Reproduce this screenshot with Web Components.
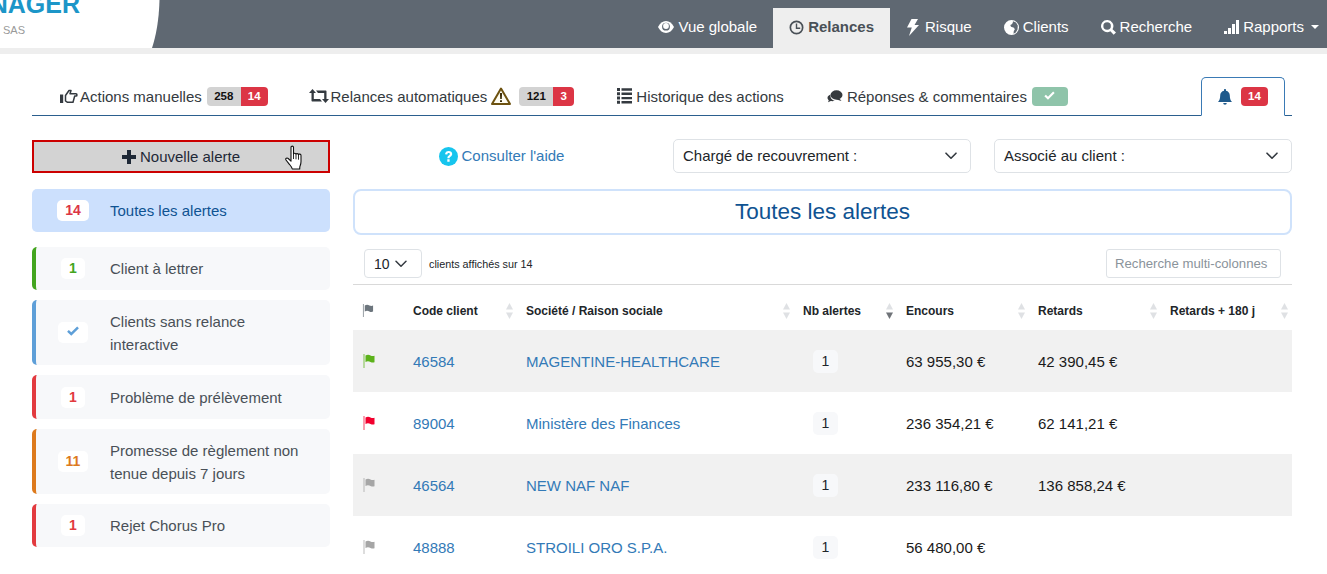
<!DOCTYPE html>
<html lang="fr">
<head>
<meta charset="utf-8">
<title>Relances</title>
<style>
  html, body { margin: 0; height: 574px; overflow: hidden; background: #fff; }
  body { font: 15px/22px "Liberation Sans", Arial, sans-serif; color: #212529; }
</style>
</head>
<body>
<app-header active="Relances"></app-header>
<main-tabs></main-tabs>
<alert-page></alert-page>

<script>
const ICONS = {
  eye: '<path d="M0 7C2 3.200 4.600 1 8 1s6 2.200 8 6c-2 3.800-4.600 6-8 6S2 10.800 0 7z"/><circle cx="8" cy="6.700" r="3.900" fill="#5f6872"/><circle cx="8" cy="6" r="2.900"/>',
  clock: '<path fill-rule="evenodd" d="M7.500.5a7 7 0 1 0 0 14 7 7 0 0 0 0-14zm0 1.700a5.300 5.300 0 1 1 0 10.600 5.300 5.300 0 0 1 0-10.600z"/><path d="M6.800 3.500h1.400v4h3v1.400H6.800z"/>',
  bolt: '<path d="M5.500 0h6.500L8.500 6H13L3 17l2.800-8.500H1z"/>',
  globe: '<circle cx="7.500" cy="7.500" r="7.500"/><path fill="#5f6872" d="M9 1.200l3 1.300 1.800 3-.3 4-1.700 3-2.300 1.300.3-2.700 1-1.600-.8-1.700L7 6.800 6.300 5l1.500-.8.900-1.200z"/>',
  search: '<path fill-rule="evenodd" d="M6.500 0a6.500 6.500 0 1 0 3.500 12L13.500 15.800 16 13.300 12.300 9.800A6.500 6.500 0 0 0 6.500 0zm0 2.500a4 4 0 1 1 0 8 4 4 0 0 1 0-8z"/>',
  signal: '<path d="M0 11h3v3H0zM4 8h3v6H4zM8 4h3v10H8zM12 0h3v14h-3z"/>',
  thumb: '<path d="M0 5.500h3.200v8.500H0z"/><path d="M5.500 6.500 9 1.500h2L10 4.800h6c1.300 0 1.300 2.200 0 2.200h-1.300L13 13.200H7.200L5.500 12z" fill="none" stroke="currentColor" stroke-width="1.500" stroke-linejoin="round"/>',
  retweet: '<path d="M3.500 0 7 4H4.800v6H11l2 2.500H3.500c-.6 0-1-.4-1-1V4H0zM7 1.500h9.500c.6 0 1 .4 1 1V10H20l-3.500 4-3.500-4h2.200V4H9z"/>',
  list: '<path d="M0 0h3v3H0zM4.500 .3H15v2.400H4.500zM0 4.300h3v3H0zM4.500 4.600H15V7H4.500zM0 8.600h3v3H0zM4.500 8.900H15v2.400H4.500zM0 12.800h3v3H0zM4.500 13.100H15v2.400H4.500z"/>',
  comments: '<ellipse cx="9.500" cy="5" rx="6" ry="4.700" fill="#35393d"/><path fill="#35393d" d="M12 8l2.500 3-5-1.500z"/><path fill="#35393d" d="M3.500 4.500C1.500 5.200.5 6.500.5 7.800c0 1 .5 1.800 1.300 2.400L1 12.300 3.800 11c1.200.3 2.800.2 4-.4C5 10.300 3 8 3.500 4.500z"/>',
  check: '<path d="M5.800 12.500.5 7.200l2.200-2.200 3.100 3.100L13.300.6l2.200 2.200z"/>',
  bell: '<path d="M7 0c.6 0 1 .4 1 1v.7c2.300.5 3.800 2.300 3.800 4.800 0 3.200.7 4.600 2.200 6.500H0c1.500-1.900 2.200-3.300 2.200-6.500C2.200 4 3.700 2.200 6 1.700V1c0-.6.400-1 1-1zM5.200 14h3.600a1.800 1.800 0 0 1-3.600 0z"/>',
  plus: '<path d="M5 0h4v5h5v4H9v5H5V9H0V5h5z"/>',
  flag: '<path d="M1 0h1v14H1z" opacity=".75"/><path d="M3 1.500c2-1 3.500-.8 5 0 1.300.6 2.500.7 4 .2v6.500c-1.500.6-2.700.4-4-.2-1.500-.7-3-1-5 0z"/>'
}

function icon(name, w, h, vb, fill) {
  return `<svg width="${w}" height="${h}" viewBox="0 0 ${vb}" fill="${fill || 'currentColor'}" aria-hidden="true">${ICONS[name]}</svg>`
}

class AppHeader extends HTMLElement {
  constructor() {
    super()
    const items = [
      ['Vue globale', icon('eye', 16, 14, '16 14')],
      ['Relances', icon('clock', 15, 15, '15 15')],
      ['Risque', icon('bolt', 15, 17, '15 17')],
      ['Clients', icon('globe', 15, 15, '15 15')],
      ['Recherche', icon('search', 15, 15, '16 16')],
      ['Rapports', icon('signal', 15, 14, '15 14')]
    ]
    const active = this.getAttribute('active')
    this.attachShadow({ mode: 'open' }).innerHTML = `
      <style>
        :host { display: block; position: relative; height: 54px; box-sizing: border-box; background: #5f6872; border-bottom: 6px solid #eee; }
        .logo { position: absolute; left: 0; top: 0; width: 160px; height: 48px; overflow: hidden; }
        .logo svg { position: absolute; left: 0; top: 0; }
        .brand { position: absolute; right: 80px; top: -11px; font: bold 25px/30px "Liberation Sans", Arial, sans-serif; color: #1c96c8; white-space: nowrap; }
        .sas { position: absolute; left: 3px; top: 24px; font: 11px/13px "Liberation Sans", Arial, sans-serif; color: #9a9a9a; }
        nav { display: flex; justify-content: flex-end; height: 48px; align-items: flex-end; }
        a { display: flex; align-items: center; gap: 4px; height: 40px; padding: 0 16px 2px; box-sizing: border-box; color: #fff; white-space: nowrap; }
        a.on { background: #eee; color: #495057; font-weight: bold; }
        .caret { width: 0; height: 0; margin-left: 3px; border: 4px solid transparent; border-top-color: #fff; border-bottom: 0; }
        a:last-child { padding-right: 8px; }
      </style>
      <div class="logo">
        <svg width="160" height="48" viewBox="0 0 160 48"><path fill="#fff" d="M0 0H159.500C159 20 156 36 152 48H0z"/></svg>
        <span class="brand">NAGER</span>
        <span class="sas">SAS</span>
      </div>
      <nav>
        ${items.map(([label, svg]) => `<a class="${label === active ? 'on' : ''}">${svg}<span>${label}</span>${label === 'Rapports' ? '<i class="caret"></i>' : ''}</a>`).join('')}
      </nav>
    `
  }
}
customElements.define('app-header', AppHeader)

class CountPill extends HTMLElement {
  constructor() {
    super()
    const grey = this.getAttribute('grey')
    const red = this.getAttribute('red')
    this.attachShadow({ mode: 'open' }).innerHTML = `
      <style>
        :host { display: inline-flex; height: 19px; border-radius: 4px; overflow: hidden; font: bold 11.500px/19px "Liberation Sans", Arial, sans-serif; text-align: center; }
        .g { background: #d3d3d3; color: #111; width: 34px; }
        .r { background: #dc3545; color: #fff; padding: 0 7px; min-width: 7px; }
      </style>
      ${grey ? `<span class="g">${grey}</span>` : ''}<span class="r">${red}</span>
    `
  }
}
customElements.define('count-pill', CountPill)

class MainTabs extends HTMLElement {
  constructor() {
    super()
    this.attachShadow({ mode: 'open' }).innerHTML = `
      <style>
        :host { display: flex; align-items: stretch; height: 38px; margin: 23px 35px 0 32px; padding-left: 28px; gap: 41px; border-bottom: 1px solid #2b5f8e; color: #343a40; }
        .tab { display: flex; align-items: center; gap: 2px; white-space: nowrap; }
        .tab > span:not(.ok) { padding-top: 2px; }
        .ok { display: inline-flex; align-items: center; justify-content: center; width: 36px; height: 19px; margin-left: 1px; border-radius: 4px; background: #8fc4aa; color: #fff; }
        .bell { margin-left: auto; margin-right: 7px; width: 84px; box-sizing: border-box; height: 39px; justify-content: center; gap: 9px; border: 1px solid #3a7ab5; border-bottom: 1px solid #fff; border-radius: 5px 5px 0 0; color: #1f5a8c; }
        .pill { margin-left: 3px; }
        .warn { margin: 0 6px 0 2px; }
        .hist { margin-left: 2px; gap: 4px; }
        .rep { margin-left: 2px; gap: 4px; }
      </style>
      <div class="tab">${icon('thumb', 18, 15, '18 15')}<span>Actions manuelles</span><count-pill class="pill" grey="258" red="14"></count-pill></div>
      <div class="tab">${icon('retweet', 20, 14, '20 14')}<span>Relances automatiques</span>
        <svg class="warn" width="20" height="18" viewBox="0 0 20 18"><path d="M10 1.500 19 17H1z" fill="#fffdf2" stroke="#6d5210" stroke-width="2" stroke-linejoin="round"/><path d="M8.900 6h2.200l-.3 6H9.200zM9 13.200h2v1.900H9z" fill="#3d2f0c"/></svg>
        <count-pill grey="121" red="3"></count-pill></div>
      <div class="tab hist">${icon('list', 15, 16, '15 16')}<span>Historique des actions</span></div>
      <div class="tab rep">${icon('comments', 16, 13, '16 13')}<span>Réponses &amp; commentaires</span><span class="ok">${icon('check', 11, 10, '16 14')}</span></div>
      <div class="tab bell">${icon('bell', 14, 16, '14 16')}<count-pill red="14"></count-pill></div>
    `
  }
}
customElements.define('main-tabs', MainTabs)

class AlertItem extends HTMLElement {
  constructor() {
    super()
    const color = this.getAttribute('color') || '#dc3545'
    const on = this.hasAttribute('active')
    this.attachShadow({ mode: 'open' }).innerHTML = `
      <style>
        :host { display: grid; grid-template-columns: 74px 1fr; align-items: center; box-sizing: border-box; min-height: 43px; padding: 9.500px 24px 9.500px 0; border-left: 4px solid ${color}; border-radius: 5px; background: ${on ? '#cce0fd' : '#f7f8fa'}; color: ${on ? '#0f5392' : '#495057'}; line-height: 23px; }
        .n { justify-self: center; padding: 0 8px; box-sizing: border-box; height: 21px; border-radius: 5px; background: #fff; color: ${color === '#cce0fd' ? '#dc3545' : color}; font: bold 14px/21px "Liberation Sans", Arial, sans-serif; text-align: center; }
      </style>
      <span class="n"><slot name="n"></slot></span>
      <span><slot></slot></span>
    `
  }
}
customElements.define('alert-item', AlertItem)

class NewAlertButton extends HTMLElement {
  constructor() {
    super()
    this.attachShadow({ mode: 'open' }).innerHTML = `
      <style>
        :host { display: flex; position: relative; align-items: center; justify-content: center; gap: 4px; height: 33px; box-sizing: border-box; background: #d3d3d3; border: 2px solid #c00; color: #1f2937; }
        .hand { position: absolute; left: 251px; top: 3px; }
      </style>
      ${icon('plus', 14, 14, '14 14')}<slot></slot>
      <svg class="hand" width="20" height="26" viewBox="0 0 20 26"><path d="M6 2.200c0-1.500 2.500-1.500 2.500 0V9c0-1 2.500-1 2.500 .3 0-1 2.500-1 2.500 .4 .2-.9 2.500-.8 2.500 .8v6c0 3-1 4-1.200 5.500 0 .7-.1 1.500-.1 2H7.300c-.3-2-1.800-3.300-3.300-5.200L1 15c-.9-1.500 1-2.700 2.200-1.500L6 16.200z" fill="#fff" stroke="#111" stroke-width="1.100" stroke-linejoin="round"/><path d="M8.500 9v5M11 9.300v5M13.500 9.700v5" stroke="#111" stroke-width=".9" fill="none"/></svg>
    `
  }
}
customElements.define('new-alert-button', NewAlertButton)

class FilterSelect extends HTMLElement {
  constructor() {
    super()
    this.attachShadow({ mode: 'open' }).innerHTML = `
      <style>
        :host { display: flex; align-items: center; justify-content: space-between; box-sizing: border-box; height: 34px; padding: 0 13px 0 9px; border: 1px solid #dee2e6; border-radius: 5px; color: #212529; background: #fff; white-space: nowrap; }
        svg { display: block; }
      </style>
      <span><slot></slot></span>
      <svg width="12" height="8" viewBox="0 0 12 8"><path d="M1 1.200l5 5 5-5" fill="none" stroke="#343a40" stroke-width="1.600" stroke-linecap="round" stroke-linejoin="round"/></svg>
    `
  }
}
customElements.define('filter-select', FilterSelect)

class AlertTable extends HTMLElement {
  constructor() {
    super()
    const heads = ['Code client', 'Société / Raison sociale', 'Nb alertes', 'Encours', 'Retards', 'Retards + 180 j']
    const rows = [
      ['#5cb21a', '46584', 'MAGENTINE-HEALTHCARE', '63 955,30 €', '42 390,45 €'],
      ['#f2002e', '89004', 'Ministère des Finances', '236 354,21 €', '62 141,21 €'],
      ['#a6a6a6', '46564', 'NEW NAF NAF', '233 116,80 €', '136 858,24 €'],
      ['#a6a6a6', '48888', 'STROILI ORO S.P.A.', '56 480,00 €', '']
    ]
    const sort = (down) => `<svg class="sort" width="7" height="16" viewBox="0 0 7 16"><path d="M3.500 0 7 6.500H0z" fill="#dfe1e4"/><path d="M0 9.500h7L3.500 16z" fill="${down ? '#6f7378' : '#dfe1e4'}"/></svg>`
    this.attachShadow({ mode: 'open' }).innerHTML = `
      <style>
        :host { display: block; }
        .bar { display: flex; align-items: flex-start; height: 35px; padding: 0 11px; border-bottom: 1px solid #d9d9d9; }
        .len { display: flex; align-items: center; justify-content: space-between; box-sizing: border-box; width: 58px; height: 29px; padding: 0 14px 0 9px; border: 1px solid #dee2e6; border-radius: 4px; font-size: 14px; }
        .info { margin-left: 7px; font-size: 10.800px; line-height: 31px; color: #212529; }
        .find { margin-left: auto; box-sizing: border-box; width: 175px; height: 29px; padding: 0 8px; border: 1px solid #dee2e6; border-radius: 3px; font-size: 13.200px; line-height: 27px; color: #8a939b; white-space: nowrap; }
        table { width: 939px; table-layout: fixed; border-collapse: collapse; }
        th, td { padding: 0 0 0 9px; text-align: left; white-space: nowrap; }
        th { position: relative; box-sizing: border-box; height: 45px; padding-top: 6px; font-size: 12px; color: #212529; }
        td { box-sizing: border-box; height: 62px; padding-top: 1px; color: #1a1a1a; }
        tr:nth-child(odd) td { background: #f1f1f1; }
        td.l { color: #337ab7; }
        .sort { position: absolute; right: 4px; top: 18px; }
        td svg, th svg.h { display: block; margin-top: -1px; }
        .b { display: inline-block; width: 25px; height: 23px; margin-left: 10px; border-radius: 5px; background: #f7f8fa; text-align: center; font-size: 14px; line-height: 22px; color: #212529; }
      </style>
      <div class="bar">
        <div class="len">10<svg width="12" height="8" viewBox="0 0 12 8"><path d="M1 1.200l5 5 5-5" fill="none" stroke="#343a40" stroke-width="1.500" stroke-linecap="round" stroke-linejoin="round"/></svg></div>
        <span class="info">clients affichés sur 14</span>
        <div class="find">Recherche multi-colonnes</div>
      </div>
      <table>
        <colgroup><col style="width:51px"><col style="width:113px"><col style="width:277px"><col style="width:103px"><col style="width:132px"><col style="width:132px"><col style="width:131px"></colgroup>
        <thead><tr>
          <th>${icon('flag', 12, 13, '13 14', '#6c757d').replace('<svg', '<svg class="h"')}</th>
          ${heads.map(h => `<th>${h}${sort(h === 'Nb alertes')}</th>`).join('')}
        </tr></thead>
        <tbody>
          ${rows.map(r => `<tr>
            <td>${icon('flag', 14, 14, '13 14', r[0])}</td>
            <td class="l">${r[1]}</td><td class="l">${r[2]}</td>
            <td><span class="b">1</span></td>
            <td>${r[3]}</td><td>${r[4]}</td><td></td>
          </tr>`).join('')}
        </tbody>
      </table>
    `
  }
}
customElements.define('alert-table', AlertTable)

class AlertPage extends HTMLElement {
  constructor() {
    super()
    this.attachShadow({ mode: 'open' }).innerHTML = `
      <style>
        :host { display: grid; grid-template-columns: 298px 939px; gap: 23px; margin: 24px 0 0 32px; }
        aside { display: flex; flex-direction: column; gap: 10px; }
        new-alert-button { margin-bottom: 6px; }
        alert-item[active] { margin-bottom: 5px; }
        .top { display: grid; grid-template-columns: 297px 298px 298px; column-gap: 23px; height: 34px; margin-top: -1px; align-items: center; }
        .help { display: flex; align-items: center; justify-content: center; gap: 4px; color: #337ab7; }
        .title { box-sizing: border-box; height: 46px; margin: 16px 0 14px; border: 2px solid #cfe2fb; border-radius: 8px; text-align: center; font-size: 22.500px; line-height: 42px; color: #0f5392; }
      </style>
      <aside>
        <new-alert-button>Nouvelle alerte</new-alert-button>
        <alert-item active color="#cce0fd"><span slot="n">14</span>Toutes les alertes</alert-item>
        <alert-item color="#43a51f"><span slot="n">1</span>Client à lettrer</alert-item>
        <alert-item color="#5e9fd8"><svg slot="n" width="14" height="11" viewBox="0 0 16 14" fill="#5e9fd8"><path d="M5.800 12.500.5 7.200l2.200-2.200 3.100 3.100L13.300.6l2.200 2.200z"/></svg>Clients sans relance interactive</alert-item>
        <alert-item color="#e23a3f" style="min-height:44px"><span slot="n">1</span>Problème de prélèvement</alert-item>
        <alert-item color="#dd7a1d"><span slot="n">11</span>Promesse de règlement non tenue depuis 7 jours</alert-item>
        <alert-item color="#e23a3f"><span slot="n">1</span>Rejet Chorus Pro</alert-item>
      </aside>
      <section>
        <div class="top">
          <div class="help">
            <svg width="19" height="19" viewBox="0 0 19 19"><circle cx="9.500" cy="9.500" r="9.500" fill="#17c5ee"/><path d="M6 7.300C6.200 5.200 7.700 4 9.700 4c2 0 3.500 1.200 3.500 3 0 1.300-.7 2-1.700 2.700-.7.500-1 .8-1 1.600H8.400c0-1.500.4-2.100 1.400-2.800.7-.5 1.100-.9 1.100-1.400 0-.7-.5-1.100-1.200-1.100-.8 0-1.300.5-1.400 1.400zM8.300 12.300h2.300v2.400H8.300z" fill="#fff"/></svg>
            <span>Consulter l'aide</span>
          </div>
          <filter-select>Chargé de recouvrement :</filter-select>
          <filter-select>Associé au client :</filter-select>
        </div>
        <div class="title">Toutes les alertes</div>
        <alert-table></alert-table>
      </section>
    `
  }
}
customElements.define('alert-page', AlertPage)
</script>
</body>
</html>
